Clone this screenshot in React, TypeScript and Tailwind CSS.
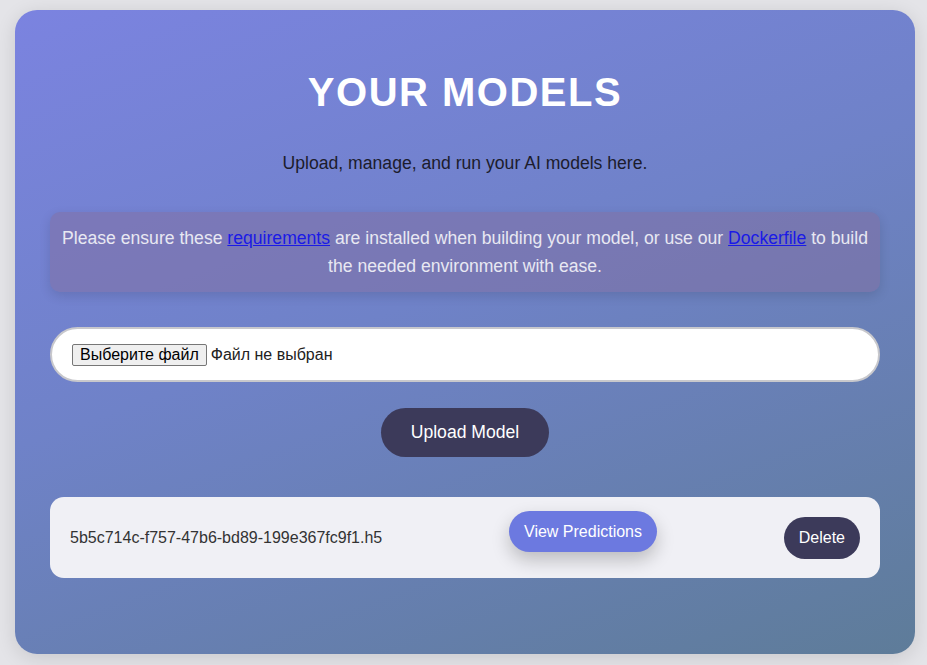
import React from 'react';

const font = { fontFamily: '"Liberation Sans", Arial, sans-serif' };

function FilePicker() {
  // native file input renders in the browser locale, so draw it by hand
  return (
    <div className="mt-[35px] h-[55px] rounded-full border-2 border-[#c8c8cc] bg-white flex items-center px-[20px]">
      <span className="h-[22px] px-[7px] flex items-center border border-[#767676] rounded-[2px] bg-[#efefef] text-[16px] text-black leading-none">
        Выберите файл
      </span>
      <span className="ml-[4px] text-[16px] text-[#222]">Файл не выбран</span>
    </div>
  );
}

function ModelRow({ name }: { name: string }) {
  return (
    <div className="mt-[40px] h-[81px] rounded-[14px] bg-[#f0f0f5] flex items-center justify-between px-[20px]">
      <span className="text-[16px] text-[#333]">{name}</span>
      <button className="-translate-y-[6px] h-[41px] px-[15px] rounded-full bg-[#6c79e0] text-white text-[16px] shadow-[0_8px_18px_rgba(0,0,0,0.22)]">
        View Predictions
      </button>
      <button className="h-[42px] px-[15px] rounded-full bg-[#3c3a5a] text-white text-[16px]">
        Delete
      </button>
    </div>
  );
}

export default function App() {
  return (
    <div className="min-h-screen bg-[#e4e4e8] pt-[10px]" style={font}>
      <div className="ml-[15px] w-[900px] h-[644px] rounded-[22px] bg-[linear-gradient(160deg,#7b83e0_0%,#6f82c8_45%,#5e7c99_100%)] shadow-[0_4px_20px_rgba(0,0,0,0.12)] px-[35px] pt-[59px]">
        <h1 className="text-center text-white font-bold text-[40px] leading-[46px] tracking-[1.5px]">
          YOUR MODELS
        </h1>
        <p className="mt-[38px] text-center text-[17.6px] leading-[20px] text-[#1c1c2c]">
          Upload, manage, and run your AI models here.
        </p>
        <div className="mt-[39px] rounded-[10px] bg-[rgba(130,110,160,0.5)] shadow-[0_4px_12px_rgba(0,0,0,0.12)] px-[12px] py-[12px] text-center text-[17.6px] leading-[28px] text-[#e8e8f2]">
          Please ensure these{' '}
          <a href="#" className="text-[#1a1ae6] underline">requirements</a>{' '}
          are installed when building your model, or use our{' '}
          <a href="#" className="text-[#1a1ae6] underline">Dockerfile</a>{' '}
          to build the needed environment with ease.
        </div>
        <FilePicker />
        <div className="mt-[26px] flex justify-center">
          <button className="h-[49px] w-[168px] rounded-full bg-[#3c3a5a] text-white text-[17.6px]">
            Upload Model
          </button>
        </div>
        <ModelRow name="5b5c714c-f757-47b6-bd89-199e367fc9f1.h5" />
      </div>
    </div>
  );
}
